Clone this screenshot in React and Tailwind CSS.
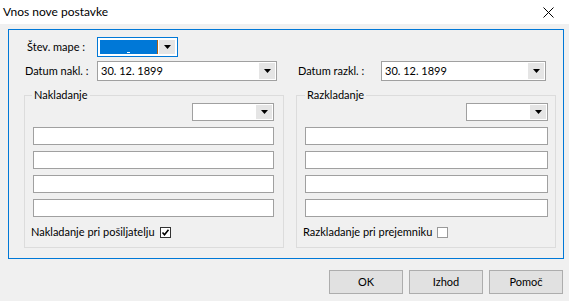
import React from 'react';

const Arrow = () => (
    <svg width="7" height="4" viewBox="0 0 7 4" className="block">
        <path d="M0 0 H7 L3.5 4 Z" fill="#000" />
    </svg>
);

const DropButton = ({ className = '' }) => (
    <div className={`w-[16px] shrink-0 bg-[#e5e5e5] flex items-center justify-center ${className}`}>
        <Arrow />
    </div>
);

const DateField = ({ width, value }) => (
    <div className={`h-[20px] ${width} shrink-0 border border-[#a0a0a0] bg-white flex p-[1px]`}>
        <div className="flex-1 pl-[2px] leading-[16px]">{value}</div>
        <DropButton />
    </div>
);

const TextBox = () => <div className="h-[18px] border border-[#a0a0a0] bg-white" />;

const Check = ({ checked }) => (
    <div className={`w-[11px] h-[11px] shrink-0 bg-white border ${checked ? 'border-[#333]' : 'border-[#999]'} flex items-center justify-center`}>
        {checked && (
            <svg width="9" height="9" viewBox="0 0 9 9">
                <path d="M1.5 4.5 L3.5 6.8 L7.5 1.8" fill="none" stroke="#000" strokeWidth="1.6" />
            </svg>
        )}
    </div>
);

const Group = ({ title, checkLabel, checked, padRight, legendShift }) => (
    <fieldset className={`w-[260px] h-[161px] border border-[#dcdcdc] pl-[8px] ${padRight} pb-[7px]`}>
        <legend className={`${legendShift} px-[2px] leading-[16px]`}>{title}</legend>
        <div className="flex justify-end">
            <div className="w-[82px] h-[18px] border border-[#a0a0a0] bg-white flex justify-end p-[1px]">
                <DropButton />
            </div>
        </div>
        <div className="mt-[6px] flex flex-col gap-[6px]">
            <TextBox />
            <TextBox />
            <TextBox />
            <TextBox />
        </div>
        <div className="mt-[7px] -ml-[2px] flex items-center gap-[5px] leading-[16px] whitespace-nowrap">
            <span>{checkLabel}</span>
            <Check checked={checked} />
        </div>
    </fieldset>
);

export default function App() {
    return (
        <div className="w-[569px] h-[301px] bg-[#f0f0f0] flex flex-col text-[11px] text-black font-['Lato',sans-serif] whitespace-nowrap">
            <div className="h-[24px] shrink-0 bg-white flex items-center justify-between pl-[3px] pr-[15px] text-[12px]">
                <span>Vnos nove postavke</span>
                <svg width="11" height="11" viewBox="0 0 11 11">
                    <path d="M0.5 0.5 L10.5 10.5 M10.5 0.5 L0.5 10.5" stroke="#000" strokeWidth="1" />
                </svg>
            </div>

            <div className="mt-[5px] ml-[8px] w-[556px] h-[230px] shrink-0 border border-[#0078d7] pl-[15px] pr-[7px] pt-[7px] flex flex-col">
                <div className="flex items-center h-[20px]">
                    <span className="ml-[3px] w-[70px] shrink-0">Štev. mape :</span>
                    <div className="w-[81px] h-[20px] border border-[#0078d7] bg-white flex p-[2px]">
                        <div className="w-[58px] bg-[#0078d7] flex items-end justify-center pb-[1px]">
                            <div className="w-[3px] h-[1px] bg-white" />
                        </div>
                        <div className="w-[1px] bg-[#b06010]" />
                        <div className="w-[1px]" />
                        <DropButton />
                    </div>
                </div>

                <div className="mt-[4px] flex items-center">
                    <span className="ml-[1px] w-[72px] shrink-0">Datum nakl. :</span>
                    <DateField width="w-[180px]" value="30. 12. 1899" />
                    <span className="ml-[21px] w-[83px] shrink-0">Datum razkl. :</span>
                    <DateField width="w-[165px]" value="30. 12. 1899" />
                </div>

                <div className="mt-[6px] flex gap-[12px]">
                    <Group title="Nakladanje" checkLabel="Nakladanje pri pošiljatelju" checked padRight="pr-[9px]" legendShift="-ml-[1px]" />
                    <Group title="Razkladanje" checkLabel="Razkladanje pri prejemniku" checked={false} padRight="pr-[7px]" legendShift="ml-[0px]" />
                </div>
            </div>

            <div className="mt-[11px] pr-[6px] flex justify-end gap-[6px]">
                <button className="w-[74px] h-[24px] border border-[#adadad] bg-[#e1e1e1]">OK</button>
                <button className="w-[74px] h-[24px] border border-[#adadad] bg-[#e1e1e1]">Izhod</button>
                <button className="w-[74px] h-[24px] border border-[#adadad] bg-[#e1e1e1]">Pomoč</button>
            </div>
        </div>
    );
}
